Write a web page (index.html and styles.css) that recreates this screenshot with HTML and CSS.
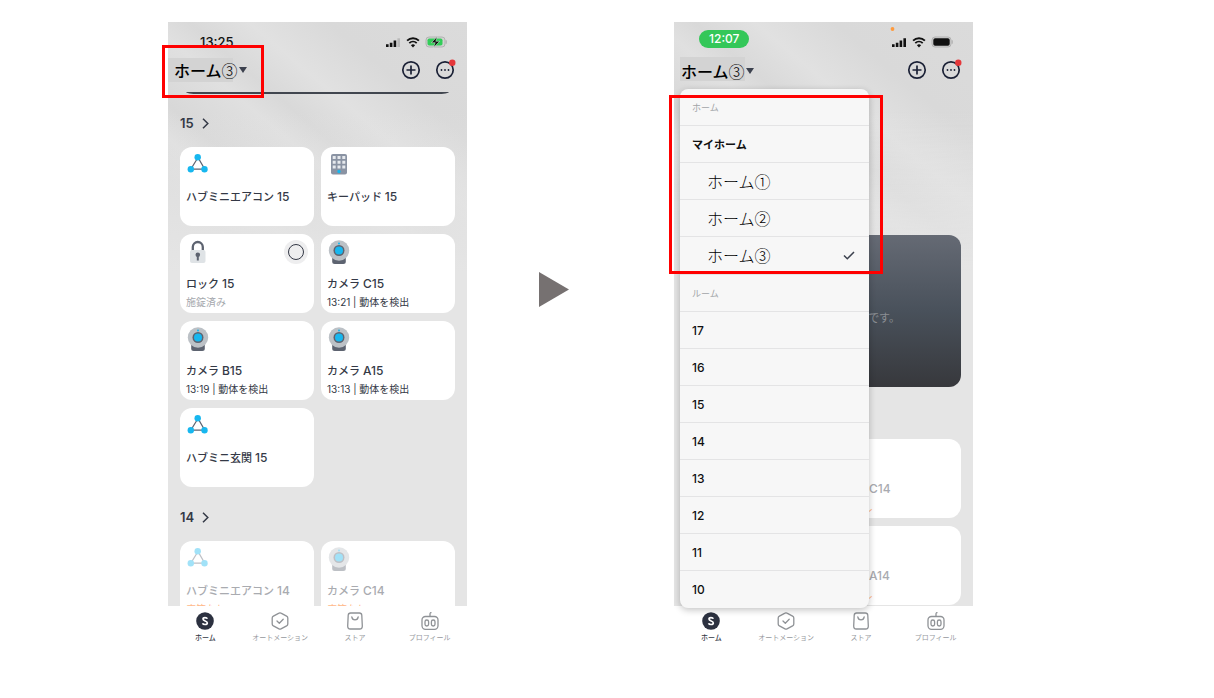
FILE: index.html
```html
<!DOCTYPE html>
<html lang="ja">
<head>
<meta charset="utf-8">
<title>ホームの切り替え</title>
<link rel="stylesheet" href="styles.css">
</head>
<body>
<svg class="defs" aria-hidden="true">
  <symbol id="hub" viewBox="0 0 24 26">
    <path d="M12 5.5 4.8 17.2h13.9z" fill="none" stroke="#5d6370" stroke-width="1.2"/>
    <g fill="#17b7ef"><circle cx="11.7" cy="5.3" r="3.2"/><circle cx="4.8" cy="17.3" r="3.2"/><circle cx="18.5" cy="17.3" r="3.2"/></g>
  </symbol>
  <symbol id="keypad" viewBox="0 0 24 26">
    <rect x="4" y="2" width="16" height="20.5" rx="2" fill="#8a93a3"/>
    <path fill="#e6e9ed" d="M5.7 4h3v3h-3zM10.5 4h3v3h-3zM15.3 4h3v3h-3zM5.7 8.700h3v3h-3zM10.5 8.700h3v3h-3zM15.3 8.700h3v3h-3zM5.7 13.400h3v3h-3zM10.5 13.400h3v3h-3zM15.3 13.400h3v3h-3z"/>
    <circle cx="12" cy="19.500" r="1.700" fill="#17b7ef"/>
  </symbol>
  <symbol id="lock" viewBox="0 0 24 26">
    <path d="M6.800 13V8a5 5 0 0 1 10 0v5" fill="none" stroke="#5d6370" stroke-width="2.300"/>
    <rect x="4" y="11" width="15.500" height="13" rx="2" fill="#dfe3e6"/>
    <circle cx="11.800" cy="15.800" r="2.300" fill="#5d6370"/><path d="M10.800 17h2v4.500h-2z" fill="#5d6370"/>
  </symbol>
  <symbol id="camera" viewBox="0 0 24 26">
    <path d="M5.200 19h13.600v3.500q0 2.500-2.500 2.500H7.700q-2.500 0-2.500-2.500z" fill="#5d6370"/>
    <circle cx="12" cy="11.500" r="10.200" fill="#bcc1c6"/>
    <circle cx="12" cy="11.500" r="5.500" fill="#5d6370"/>
    <circle cx="12" cy="11.500" r="4" fill="#17b7ef"/><circle cx="12" cy="4.400" r="1" fill="#17b7ef"/>
  </symbol>
  <symbol id="wifi" viewBox="0 0 41 12">
    <path d="M22.100 4.600a8.600 8.600 0 0 1 11.800 0M24.300 7.100a5.400 5.400 0 0 1 7.400 0" fill="none" stroke="#111" stroke-width="1.900"/>
    <path d="M28 11.400 25.900 9.200a3 3 0 0 1 4.200 0z" fill="#111"/>
  </symbol>
  <symbol id="plus" viewBox="0 0 20 20">
    <g fill="none" stroke="#1b2136" stroke-width="1.700"><circle cx="10" cy="10" r="8.200"/><path d="M10 5.500v9M5.500 10h9"/></g>
  </symbol>
  <symbol id="more" viewBox="0 0 20 20">
    <circle cx="10" cy="10" r="8.200" fill="none" stroke="#1b2136" stroke-width="1.700"/>
    <g fill="#1b2136"><circle cx="6.500" cy="10" r=".9"/><circle cx="10" cy="10" r=".9"/><circle cx="13.500" cy="10" r=".9"/></g>
    <circle cx="17.300" cy="2.700" r="3.200" fill="#e5383b"/>
  </symbol>
  <symbol id="nav-home" viewBox="0 0 18 18">
    <circle cx="9" cy="9" r="8.800" fill="#2c3140"/>
    <path d="M11.300 6.700C10.800 5.400 7.100 5 7 7.100c0 2.200 4.300 1.500 4.300 3.800 0 2.200-4.200 2-4.700.3" fill="none" stroke="#fff" stroke-width="1.700"/>
  </symbol>
  <symbol id="nav-auto" viewBox="0 0 18 18">
    <g fill="none" stroke="#8f9296" stroke-width="1.300" stroke-linejoin="round" stroke-linecap="round"><path d="M8 1.100q1-.6 2 0l5.600 3q1.200.7 1.200 2v5.800q0 1.300-1.200 2l-5.600 3q-1 .6-2 0l-5.600-3q-1.200-.7-1.200-2V6.100q0-1.300 1.200-2z"/><path d="m6 9 2.300 2.200 3.900-4"/></g>
  </symbol>
  <symbol id="nav-store" viewBox="0 0 18 18">
    <g fill="none" stroke="#8f9296" stroke-width="1.300" stroke-linecap="round"><path d="M4.600 1h8.800q2.200 0 2.400 2.200l.5 10.800q.1 3-2.600 3H4.300q-2.700 0-2.600-3l.5-10.800Q2.400 1 4.600 1z"/><path d="M5.800 4.800c.5 4 5.900 4 6.400 0"/></g>
  </symbol>
  <symbol id="nav-profile" viewBox="0 0 18 18">
    <g fill="none" stroke="#8f9296" stroke-width="1.300"><rect x="1" y="4.500" width="16" height="12.800" rx="3.500"/><rect x="4" y="8" width="3.600" height="6" rx="1.800"/><rect x="10.400" y="8" width="3.600" height="6" rx="1.800"/><path d="M9 4.500V2q0-1.500 1.500-1.500"/></g>
  </symbol>
</svg>

<main class="stage">
  <section class="phone phone-before" aria-label="ホーム画面">
    <div class="screen">
      <div class="status">
        <span class="clock">13:25</span>
        <svg class="status-icons" viewBox="0 0 62 12" aria-hidden="true">
          <path fill="#111" d="M1 8.200h2.600V11H1zM4.800 6.700h2.600V11H4.800zM8.600 4.500h2.600V11H8.600z"/><path fill="#b9b9b9" d="M12.400 2.300H15V11h-2.600z"/>
          <use href="#wifi" width="41" height="12"/>
          <rect x="41" y="1" width="19" height="10" rx="3" fill="#d2d2d2" stroke="#aaa" stroke-width=".8"/>
          <rect x="42.500" y="2.400" width="15" height="7.200" rx="1.800" fill="#32cd58"/><path d="M61.200 4.300v3.400" stroke="#aaa"/>
          <path d="m52.300.6-6 6.100h3.900L48.500 11.600l6.200-6.300h-3.900z" fill="#111" stroke="#dff5e4" stroke-width=".5"/>
        </svg>
      </div>
      <header class="topbar">
        <button class="home-switch" type="button">ホーム<span class="thin">③</span><svg class="caret" viewBox="0 0 8 6" aria-hidden="true"><path d="M0 0h8L4 6z"/></svg></button>
        <button class="round" type="button" aria-label="追加"><svg viewBox="0 0 20 20"><use href="#plus"/></svg></button>
        <button class="round" type="button" aria-label="メニュー"><svg viewBox="0 0 20 20"><use href="#more"/></svg></button>
      </header>
      <div class="rooms">
        <div class="banner-edge"></div>
        <h2 class="room-title">15<svg viewBox="0 0 7 11" aria-hidden="true"><path d="m1 .8 4.800 4.700L1 10.200"/></svg></h2>
        <div class="cards">
          <article class="card"><svg class="device"><use href="#hub"/></svg><h3>ハブミニエアコン <span>15</span></h3></article>
          <article class="card"><svg class="device"><use href="#keypad"/></svg><h3>キーパッド <span>15</span></h3></article>
          <article class="card"><svg class="device"><use href="#lock"/></svg><h3>ロック <span>15</span></h3><p class="muted">施錠済み</p>
            <button class="lock-toggle" type="button" aria-label="解錠"></button></article>
          <article class="card"><svg class="device"><use href="#camera"/></svg><h3>カメラ <span>C15</span></h3><p>13:21 | 動体を検出</p></article>
          <article class="card"><svg class="device"><use href="#camera"/></svg><h3>カメラ <span>B15</span></h3><p>13:19 | 動体を検出</p></article>
          <article class="card"><svg class="device"><use href="#camera"/></svg><h3>カメラ <span>A15</span></h3><p>13:13 | 動体を検出</p></article>
          <article class="card"><svg class="device"><use href="#hub"/></svg><h3>ハブミニ玄関 <span>15</span></h3></article>
        </div>
        <h2 class="room-title">14<svg viewBox="0 0 7 11" aria-hidden="true"><path d="m1 .8 4.800 4.700L1 10.200"/></svg></h2>
        <div class="cards">
          <article class="card offline"><svg class="device"><use href="#hub"/></svg><h3>ハブミニエアコン <span>14</span></h3><p>応答なし</p></article>
          <article class="card offline"><svg class="device"><use href="#camera"/></svg><h3>カメラ <span>C14</span></h3><p>応答なし</p></article>
        </div>
      </div>
    </div>
    <nav class="tabs">
      <a class="active" href="#home"><svg><use href="#nav-home"/></svg>ホーム</a>
      <a href="#automation"><svg><use href="#nav-auto"/></svg>オートメーション</a>
      <a href="#store"><svg><use href="#nav-store"/></svg>ストア</a>
      <a href="#profile"><svg><use href="#nav-profile"/></svg>プロフィール</a>
    </nav>
    <div class="mark mark-title"></div>
  </section>

  <svg class="arrow" viewBox="0 0 30 35" aria-hidden="true"><path d="M0 0 30 17.500 0 35z" fill="#767171"/></svg>

  <section class="phone phone-after" aria-label="ホームの選択">
    <div class="screen">
      <div class="status">
        <span class="clock clock-pill">12:07</span>
        <svg class="status-icons" viewBox="0 0 62 12" aria-hidden="true">
          <circle cx="1.500" cy="-7" r="1.900" fill="#ff9a3c"/>
          <path fill="#111" d="M1 8.200h2.600V11H1zM4.800 6.700h2.600V11H4.800zM8.600 4.500h2.600V11H8.600zM12.400 2.300H15V11h-2.600z"/>
          <use href="#wifi" width="41" height="12"/>
          <rect x="41" y="1" width="19" height="10" rx="3" fill="#d2d2d2" stroke="#aaa" stroke-width=".8"/>
          <rect x="42.300" y="2.300" width="16.400" height="7.400" rx="1.800" fill="#111"/><path d="M61.200 4.300v3.400" stroke="#aaa"/>
        </svg>
      </div>
      <header class="topbar">
        <button class="home-switch" type="button" aria-expanded="true">ホーム<span class="thin">③</span><svg class="caret" viewBox="0 0 8 6" aria-hidden="true"><path d="M0 0h8L4 6z"/></svg></button>
        <button class="round" type="button" aria-label="追加"><svg viewBox="0 0 20 20"><use href="#plus"/></svg></button>
        <button class="round" type="button" aria-label="メニュー"><svg viewBox="0 0 20 20"><use href="#more"/></svg></button>
      </header>
      <div class="rooms">
        <div class="banner"><p>です。</p></div>
        <div class="cards">
          <article class="card offline"></article>
          <article class="card offline"><svg class="device"></svg><h3>カメラ <span>C14</span></h3><p>応答なし</p></article>
          <article class="card offline"></article>
          <article class="card offline"><svg class="device"></svg><h3>カメラ <span>A14</span></h3><p>応答なし</p></article>
        </div>
      </div>
    </div>
    <nav class="tabs">
      <a class="active" href="#home"><svg><use href="#nav-home"/></svg>ホーム</a>
      <a href="#automation"><svg><use href="#nav-auto"/></svg>オートメーション</a>
      <a href="#store"><svg><use href="#nav-store"/></svg>ストア</a>
      <a href="#profile"><svg><use href="#nav-profile"/></svg>プロフィール</a>
    </nav>
    <div class="menu">
      <h2>ホーム</h2>
      <button class="my-home" type="button">マイホーム</button>
      <button class="home-item" type="button">ホーム①</button>
      <button class="home-item" type="button">ホーム②</button>
      <button class="home-item" type="button">ホーム③<svg class="check" viewBox="0 0 12 9" aria-hidden="true"><path d="m1 4.500 3.300 3.300L11 1"/></svg></button>
      <h2 class="group">ルーム</h2>
      <button type="button">17</button>
      <button type="button">16</button>
      <button type="button">15</button>
      <button type="button">14</button>
      <button type="button">13</button>
      <button type="button">12</button>
      <button type="button">11</button>
      <button type="button">10</button>
    </div>
    <div class="mark mark-menu"></div>
  </section>
</main>
</body>
</html>
```

FILE: styles.css
```css
* { box-sizing: border-box; }

body {
  margin: 0;
  background: #fff;
  color: #343946;
  font-family: Inter, "Noto Sans CJK JP", sans-serif;
}

h2, h3, p { margin: 0; }

button {
  padding: 0;
  border: 0;
  background: none;
  color: inherit;
  font: inherit;
  text-align: left;
}

symbol { overflow: visible; }

.defs { position: absolute; width: 0; height: 0; }

.stage {
  display: grid;
  grid-template-columns: 299fr 207fr 299fr;
  padding: 22px 19.850% 0 13.840%;
}

.arrow {
  width: 30px;
  margin: 250px 0 0 72px;
}

.phone {
  position: relative;
  display: flex;
  flex-direction: column;
  height: calc(100vh - 70px);
  min-width: 0;
}

.screen {
  display: flex;
  flex: 1;
  flex-direction: column;
  min-height: 0;
  overflow: hidden;
  background:
    linear-gradient(to bottom, rgba(229, 229, 229, 0) 90px, #e5e5e5 250px),
    linear-gradient(40deg, #dcdcdc 0 50%, #e0e0e0 56%, #d8d8d8 60%, #dcdcdc 64%, #e0e0e0 68%, #d9d9d9 72%, #e1e1e1 78%, #d9d9d9 86%, #dbdbdb);
}

.status {
  display: flex;
  flex: none;
  align-items: center;
  justify-content: space-between;
  height: 32px;
  padding: 8px 20px 0 32px;
}

.clock {
  color: #111;
  font-size: 13px;
  font-weight: 500;
  line-height: 18px;
}

.phone-after .status { padding-left: 25px; }

.clock-pill {
  margin-bottom: 6px;
  padding: 0 10px;
  border-radius: 9px;
  background: #34c759;
  color: #fff;
  font-size: 12px;
  font-weight: 500;
}

.status-icons { width: 62px; height: 12px; overflow: visible; }

.topbar {
  display: flex;
  flex: none;
  align-items: center;
  gap: 14px;
  height: 32px;
  padding-right: 12px;
}

.home-switch {
  display: flex;
  align-items: center;
  margin-right: auto;
  padding-left: 6px;
  background: linear-gradient(#d3d3d3, #d3d3d3) 0 0 / 65px 24px no-repeat;
  color: #000;
  font-family: "Noto Sans CJK JP", sans-serif;
  font-size: 16px;
  font-weight: 500;
  line-height: 24px;
}

.phone-after .home-switch {
  margin-left: 6px;
  padding: 2px 0 0 1px;
}

.thin { font-weight: 300; }

.caret { width: 8px; height: 6px; margin-left: 1px; fill: #3c414e; }

.round { width: 20px; height: 20px; }
.round svg { display: block; width: 20px; height: 20px; overflow: visible; }

.rooms { flex: none; padding: 0 12px; }

.banner-edge {
  height: 2px;
  margin: 6px 6px 19px;
  border-radius: 0 0 12px 12px / 0 0 2px 2px;
  background: #41464f;
}

.room-title {
  display: flex;
  align-items: center;
  gap: 8px;
  margin: 0 0 14px;
  font-size: 13px;
  font-weight: 600;
  line-height: 20px;
}

.room-title svg {
  width: 7px;
  height: 11px;
  fill: none;
  stroke: #343946;
  stroke-width: 1.5;
}

.cards {
  display: grid;
  grid-template-columns: 1fr 1fr;
  gap: 8px 7px;
  margin-bottom: 20px;
}

.card {
  position: relative;
  min-height: 79px;
  padding: 5px 0 0 6px;
  border-radius: 12px;
  background: #fff;
}

.card h3 {
  margin-top: 11px;
  font-size: 11px;
  font-weight: 500;
  line-height: 16px;
  white-space: nowrap;
}

.card h3 span { font-size: 12px; }

.card p {
  margin-top: 3px;
  font-size: 10px;
  font-weight: 400;
  line-height: 14px;
  white-space: nowrap;
}

.card .muted { color: #a5a8ad; }

.device { display: block; width: 24px; height: 26px; }

.lock-toggle {
  position: absolute;
  top: 6px;
  right: 6px;
  display: grid;
  place-items: center;
  width: 24px;
  height: 24px;
  border-radius: 50%;
  background: #eeeeef;
}

.lock-toggle::before {
  width: 14px;
  height: 14px;
  border: 1px solid #343946;
  border-radius: 50%;
  content: "";
}

.offline .device { opacity: 0.4; }
.offline h3 { color: #a9abb0; }
.offline p { color: #ffb98a; }

.banner {
  display: flex;
  align-items: center;
  justify-content: flex-end;
  height: 152px;
  margin: 149px 0 52px;
  padding: 14px 61px 0 0;
  border-radius: 12px;
  background: linear-gradient(#656a74, #49515b 50%, #37383c);
}

.banner p { color: #8b8e94; font-size: 11px; line-height: 16px; }

.tabs {
  display: grid;
  grid-template-columns: repeat(4, 1fr);
  height: 44px;
  padding-top: 6px;
}

.tabs a {
  display: flex;
  flex-direction: column;
  align-items: center;
  gap: 2px;
  color: #96999d;
  font-size: 7px;
  line-height: 12px;
  text-decoration: none;
  white-space: nowrap;
}

.tabs svg { width: 18px; height: 18px; }
.tabs .active { color: #343946; font-weight: 500; }

.menu {
  position: absolute;
  top: 67px;
  left: 6px;
  width: calc(100% - 110px);
  overflow: hidden;
  border-radius: 8px;
  background: #f7f7f7;
  box-shadow: 0 2px 7px rgba(0, 0, 0, 0.24);
}

.menu h2,
.menu button {
  display: flex;
  align-items: center;
  width: 100%;
  height: 37px;
  padding: 0 14px 0 12px;
  border-bottom: 1px solid #e4e4e5;
}

.menu h2 { color: #a2a5a8; font-size: 9px; font-weight: 400; }
.menu .group { height: 38px; border-top: 1px solid #e4e4e5; }
.menu button { color: #111; font-size: 12px; font-weight: 500; }
.menu .my-home { font-size: 11px; font-weight: 600; }
.menu button:last-child { border-bottom: 0; }

.menu .home-item {
  padding-left: 27px;
  color: #000;
  font-family: "Noto Sans CJK JP", sans-serif;
  font-size: 16px;
  font-weight: 300;
}

.check {
  width: 12px;
  height: 9px;
  margin-left: auto;
  fill: none;
  stroke: #3c414e;
  stroke-width: 1.5;
}

.mark {
  position: absolute;
  border: 3px solid #f00;
  pointer-events: none;
}

.mark-title { top: 23px; left: -6px; width: 102px; height: 53px; }
.mark-menu { top: 73px; left: -5px; width: calc(100% - 85px); height: 179px; }
```
